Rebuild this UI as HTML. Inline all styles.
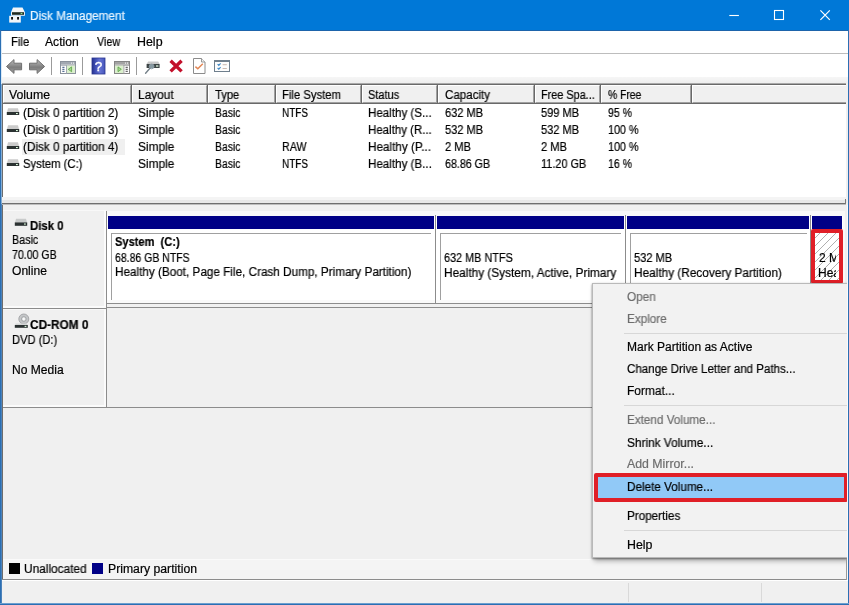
<!DOCTYPE html>
<html>
<head>
<meta charset="utf-8">
<title>Disk Management</title>
<style>
html,body{margin:0;padding:0;}
body{width:849px;height:605px;overflow:hidden;background:#f0f0f0;position:relative;
  font-family:"Liberation Sans",sans-serif;font-size:12px;color:#000;}
.a{position:absolute;}
.t{position:absolute;white-space:nowrap;line-height:14px;height:14px;font-size:12px;transform-origin:0 0;will-change:transform;-webkit-text-stroke:0.2px currentColor;}
.b{font-weight:bold;}
.g{color:#6d6d6d;}
/* window chrome */
#title{left:0;top:0;width:849px;height:31px;background:#0078d7;border-bottom:1px solid #1d64ab;box-sizing:border-box;}
#menubar{left:1px;top:31px;width:847px;height:22px;background:#fff;}
#menuline{left:1px;top:53px;width:847px;height:1px;background:#bdbdbd;}
#toolbar{left:1px;top:54px;width:847px;height:23px;background:#fff;}
#tbgrad{left:1px;top:77px;width:847px;height:7px;background:linear-gradient(#f6f6f6,#ededed);}
#bl{left:0;top:30px;width:1px;height:575px;background:#2b6fb3;}
#br{left:848px;top:30px;width:1px;height:575px;background:#2b6fb3;}
#bb{left:0;top:603px;width:849px;height:2px;background:linear-gradient(#6d9fd0 0,#6d9fd0 50%,#2b6fb3 50%);}
/* list view */
#list{left:2px;top:84px;width:844px;height:114px;background:#fff;border-left:1px solid #6d6d6d;border-top:1px solid #6a6a6a;box-sizing:border-box;}
.hd{position:absolute;top:85px;height:18px;background:#f0f0f0;box-sizing:border-box;border-top:1px solid #fff;border-left:1px solid #fff;border-right:1px solid #a0a0a0;border-bottom:1px solid #a0a0a0;}
.vs{position:absolute;top:85px;width:1px;height:18px;background:#696969;}
#hdline{left:3px;top:103px;width:843px;height:1px;background:#696969;}
#sel{left:22px;top:139px;width:103px;height:16px;background:#f0f0f0;}
/* splitter */
#split1{left:2px;top:197px;width:845px;height:6px;background:linear-gradient(#f4f4f4 0,#f4f4f4 50%,#e6e6e6 50%,#e9e9e9 100%);}
#split2{left:2px;top:203px;width:844px;height:2px;background:linear-gradient(#6e6e6e 0,#6e6e6e 50%,#bdbdbd 50%,#bdbdbd 100%);}
/* lower pane */
#lower{left:2px;top:205px;width:844px;height:374px;background:#f0f0f0;border-left:1px solid #6d6d6d;box-sizing:border-box;}
.navy{position:absolute;top:216px;height:13px;background:#000086;}
.pw{position:absolute;top:216px;height:84px;background:#fff;}
.pin{position:absolute;top:233px;height:67px;box-sizing:border-box;border-left:1px solid #a0a0a0;border-top:1px solid #a0a0a0;background:#fff;}
.vl{position:absolute;width:1px;background:#a0a0a0;}
.hl{position:absolute;height:1px;background:#a0a0a0;}
/* context menu */
#cm{left:592px;top:283px;width:256px;height:275px;background:#f2f2f2;border:1px solid #b9b9b9;box-sizing:border-box;box-shadow:0 1px 2px rgba(0,0,0,.45),2px 3px 5px rgba(0,0,0,.3);}
.sep{position:absolute;left:624px;width:224px;height:1px;background:#d7d7d7;}
.red{position:absolute;box-sizing:border-box;border:4px solid #e01f27;border-radius:2px;}
</style>
</head>
<body>
<!-- title bar -->
<div class="a" id="title"></div>
<!-- menu bar -->
<div class="a" id="menubar"></div>
<div class="a" id="menuline"></div>
<!-- toolbar -->
<div class="a" id="toolbar"></div>
<div class="a" id="tbgrad"></div>
<svg class="a" style="left:8px;top:6px;" width="18" height="18" viewBox="0 0 18 18">
<path d="M5 1.6h9.5l2.4 4.6v3.6H3V6.2z" fill="#f4f6f8"/>
<rect x="4" y="6.2" width="12" height="2.6" fill="#1f2a22"/>
<rect x="12.6" y="6.9" width="1.8" height="1.2" fill="#8fe08f"/>
<rect x="1.2" y="9.8" width="11.6" height="6.8" fill="#f1f4f8"/>
<rect x="3.1" y="11" width="1.9" height="2.6" fill="#111"/>
<rect x="9.1" y="11" width="1.9" height="2.6" fill="#111"/>
</svg>
<svg class="a" style="left:710px;top:0;" width="139" height="30" viewBox="0 0 139 30">
<path d="M19.3 15.5h9.6" stroke="#fff" stroke-width="1.1" fill="none"/>
<rect x="64.5" y="10.5" width="9" height="9" stroke="#fff" stroke-width="1.1" fill="none"/>
<path d="M110.4 10.4l9.4 9.4M119.8 10.4l-9.4 9.4" stroke="#fff" stroke-width="1.2" fill="none"/>
</svg>
<svg class="a" id="tb" style="left:0;top:54px;will-change:transform;" width="240" height="24" viewBox="0 54 240 24">
<defs>
<linearGradient id="ga" x1="0" y1="0" x2="0" y2="1"><stop offset="0" stop-color="#bdbdbd"/><stop offset="0.45" stop-color="#8a8a8a"/><stop offset="0.55" stop-color="#7c7c7c"/><stop offset="1" stop-color="#a2a2a2"/></linearGradient>
<linearGradient id="gh" x1="0" y1="0" x2="1" y2="0"><stop offset="0" stop-color="#26318a"/><stop offset="0.22" stop-color="#3b49b0"/><stop offset="0.6" stop-color="#6674d4"/><stop offset="1" stop-color="#4655bb"/></linearGradient>
</defs>
<!-- back arrow -->
<path d="M6.5 66.5L14 59.6V63.2H21.6V69.8H14V73.4z" fill="url(#ga)" stroke="#6f6f6f" stroke-width="1" stroke-linejoin="round"/>
<!-- forward arrow -->
<path d="M44.6 66.5L37.1 59.6V63.2H29.5V69.8H37.1V73.4z" fill="url(#ga)" stroke="#6f6f6f" stroke-width="1" stroke-linejoin="round"/>
<rect x="51" y="57" width="1" height="18" fill="#9b9b9b"/>
<!-- console tree icon -->
<rect x="60.5" y="61.5" width="15" height="12" fill="#fff" stroke="#8b929c" stroke-width="1"/>
<rect x="61" y="62" width="14" height="2.4" fill="#a3a9b2"/>
<rect x="71" y="62.6" width="1" height="1" fill="#fff"/><rect x="73" y="62.6" width="1" height="1" fill="#fff"/>
<rect x="60.5" y="64.6" width="15" height="1" fill="#8b929c"/>
<rect x="66.6" y="65.6" width="8.4" height="7.4" fill="#dbf0cd"/>
<rect x="66" y="65" width="1" height="8.5" fill="#a3a9b2"/>
<rect x="62.3" y="66.8" width="2.2" height="1" fill="#34507e"/><rect x="62.3" y="68.8" width="2.2" height="1" fill="#34507e"/><rect x="62.3" y="70.8" width="2.2" height="1" fill="#34507e"/>
<path d="M71.6 66.9v4.8l-3.3-2.4z" fill="#a9dc92" stroke="#58a044" stroke-width="0.8"/>
<rect x="82" y="57" width="1" height="18" fill="#9b9b9b"/>
<!-- help -->
<rect x="92" y="58" width="13" height="16" fill="url(#gh)"/>
<rect x="92" y="58" width="13" height="16" fill="none" stroke="#2a3590" stroke-width="0.8"/>
<text x="98.6" y="71.2" font-family="Liberation Sans, sans-serif" font-size="13.5" fill="#fff" stroke="#fff" stroke-width="0.35" text-anchor="middle">?</text>
<!-- icon 7 -->
<rect x="114.5" y="61.5" width="15" height="12" fill="#fff" stroke="#858585" stroke-width="1"/>
<rect x="115" y="62" width="14" height="2.4" fill="#a3a3a3"/>
<rect x="125" y="62.6" width="1" height="1" fill="#fff"/><rect x="127" y="62.6" width="1" height="1" fill="#fff"/>
<rect x="114.5" y="64.6" width="15" height="1" fill="#858585"/>
<rect x="115" y="65.6" width="8.4" height="7.4" fill="#dbf0cd"/>
<rect x="123.4" y="65" width="1" height="8.5" fill="#a3a3a3"/>
<rect x="125.6" y="66.8" width="2.2" height="1" fill="#444"/><rect x="125.6" y="68.8" width="2.2" height="1" fill="#444"/><rect x="125.6" y="70.8" width="2.2" height="1" fill="#444"/>
<path d="M118 66.9v4.8l3.3-2.4z" fill="#a9dc92" stroke="#58a044" stroke-width="0.8"/>
<rect x="136" y="57" width="1" height="18" fill="#9b9b9b"/>
<!-- rescan: disk + magnifier -->
<path d="M148.2 61.6h10l1.4 2.4H146.6z" fill="#c9c9c9"/>
<rect x="146.6" y="64" width="13" height="4" fill="#3c4444"/>
<rect x="156" y="65.4" width="2.4" height="1.2" fill="#e8ffe8"/>
<circle cx="151.6" cy="66.4" r="2.4" fill="#9fb6c0" fill-opacity="0.75" stroke="#8b9ba4" stroke-width="0.9"/>
<path d="M149.9 68.3L145.6 73.2" stroke="#76828a" stroke-width="1.4" stroke-linecap="round"/>
<!-- red X -->
<path d="M170.6 60.8L181.6 71.4M181.6 60.8L170.6 71.4" stroke="#c3102b" stroke-width="3.4" fill="none"/>
<!-- doc with check -->
<path d="M193.5 58.5h8l3.5 3.5v11.5h-11.5z" fill="#fff" stroke="#8c8c8c" stroke-width="1"/>
<path d="M201.5 58.5v3.5h3.5" fill="#f2f2f2" stroke="#8c8c8c" stroke-width="0.9"/>
<path d="M195.4 66.6l2.4 2.2l5-5" stroke="#e28756" stroke-width="1.5" fill="none"/>
<!-- checklist -->
<rect x="214.5" y="60.5" width="15" height="11" fill="#fdfdfd" stroke="#6f7f8d" stroke-width="1"/>
<rect x="214" y="60" width="16" height="2" fill="#6f7f8d"/>
<path d="M217.6 64.2l1.2 1.2l1.8-2M217.6 68l1.2 1.2l1.8-2" stroke="#3b86c4" stroke-width="1.1" fill="none"/>
<rect x="222.6" y="64.2" width="4.2" height="1" fill="#c9b9b0"/><rect x="222.6" y="68" width="4.2" height="1" fill="#c9b9b0"/>
</svg>
<!-- list -->
<div class="a" style="left:2px;top:83px;width:844px;height:1px;background:#a9a9a9;"></div>
<div class="a" id="list"></div>
<div class="hd" style="left:3px;width:128px;"></div>
<div class="vs" style="left:131px;"></div>
<div class="hd" style="left:132px;width:75px;"></div>
<div class="vs" style="left:207px;"></div>
<div class="hd" style="left:208px;width:67px;"></div>
<div class="vs" style="left:275px;"></div>
<div class="hd" style="left:276px;width:85px;"></div>
<div class="vs" style="left:361px;"></div>
<div class="hd" style="left:362px;width:75px;"></div>
<div class="vs" style="left:437px;"></div>
<div class="hd" style="left:438px;width:96px;"></div>
<div class="vs" style="left:534px;"></div>
<div class="hd" style="left:535px;width:65px;"></div>
<div class="vs" style="left:600px;"></div>
<div class="hd" style="left:601px;width:90px;"></div>
<div class="vs" style="left:691px;"></div>
<div class="hd" style="left:692px;width:154px;border-right:none;"></div>
<div class="a" id="sel"></div>
<svg class="a dk" style="left:6px;top:108px;" width="14" height="8" viewBox="0 0 14 8"><path d="M2 0.2h10l1 4H1z" fill="#cbcbcb"/><rect x="0.8" y="4" width="12.4" height="3" fill="#2b3232"/><rect x="10" y="5" width="1.8" height="1.1" fill="#dfffe0"/></svg>
<svg class="a dk" style="left:6px;top:125px;" width="14" height="8" viewBox="0 0 14 8"><path d="M2 0.2h10l1 4H1z" fill="#cbcbcb"/><rect x="0.8" y="4" width="12.4" height="3" fill="#2b3232"/><rect x="10" y="5" width="1.8" height="1.1" fill="#dfffe0"/></svg>
<svg class="a dk" style="left:6px;top:142px;" width="14" height="8" viewBox="0 0 14 8"><path d="M2 0.2h10l1 4H1z" fill="#cbcbcb"/><rect x="0.8" y="4" width="12.4" height="3" fill="#2b3232"/><rect x="10" y="5" width="1.8" height="1.1" fill="#dfffe0"/></svg>
<svg class="a dk" style="left:6px;top:159px;" width="14" height="8" viewBox="0 0 14 8"><path d="M2 0.2h10l1 4H1z" fill="#cbcbcb"/><rect x="0.8" y="4" width="12.4" height="3" fill="#2b3232"/><rect x="10" y="5" width="1.8" height="1.1" fill="#dfffe0"/></svg>
<div class="a" id="hdline"></div>
<!-- splitter -->
<div class="a" id="split1"></div>
<div class="a" id="split2"></div>
<!-- lower pane -->
<div class="a" id="lower"></div>
<div class="a" style="left:3px;top:210px;width:103px;height:98px;background:#f0f0f0;box-sizing:border-box;border-right:2px solid #fbfbfb;border-bottom:2px solid #fbfbfb;border-top:1px solid #f8f8f8;"></div>
<div class="a" style="left:3px;top:309px;width:103px;height:98px;background:#f0f0f0;box-sizing:border-box;border-right:2px solid #fbfbfb;border-bottom:2px solid #fbfbfb;border-top:1px solid #f8f8f8;"></div>
<div class="vl" style="left:106px;top:211px;height:197px;background:#8c8c8c;"></div>
<div class="hl" style="left:3px;top:308px;width:104px;background:#8c8c8c;"></div>
<div class="hl" style="left:107px;top:303px;width:739px;background:#8c8c8c;"></div>
<div class="hl" style="left:107px;top:307px;width:739px;background:#8c8c8c;"></div>
<div class="hl" style="left:3px;top:407px;width:843px;background:#8c8c8c;"></div>
<div class="a" style="left:107px;top:211px;width:738px;height:92px;background:#f9f9f9;"></div>
<div class="pw" style="left:107px;width:328px;"></div>
<div class="navy" style="left:108px;width:326px;"></div>
<div class="pin" style="left:111px;width:320px;"></div>
<div class="pw" style="left:436px;width:189px;"></div>
<div class="navy" style="left:437px;width:187px;"></div>
<div class="pin" style="left:440px;width:181px;"></div>
<div class="pw" style="left:626px;width:184px;"></div>
<div class="navy" style="left:627px;width:182px;"></div>
<div class="pin" style="left:630px;width:177px;"></div>
<div class="pw" style="left:811px;width:32px;"></div>
<div class="navy" style="left:812px;width:30px;"></div>
<div class="vl" style="left:435px;top:215px;height:88px;background:#8c8c8c;"></div>
<div class="vl" style="left:625px;top:215px;height:88px;background:#8c8c8c;"></div>
<div class="vl" style="left:810px;top:215px;height:88px;background:#8c8c8c;"></div>
<svg class="a" style="left:812px;top:229px;" width="30" height="74" viewBox="0 0 30 74"><defs><pattern id="hat" width="8" height="8" patternUnits="userSpaceOnUse" patternTransform="translate(4 0)"><path d="M-1 9L9 -1M-1 1L1 -1M7 9L9 7" stroke="#a6a6a6" stroke-width="0.9"/></pattern></defs><rect width="30" height="74" fill="#fff"/><rect width="30" height="74" fill="url(#hat)"/></svg>
<div class="a" style="left:815px;top:233px;width:21px;height:47px;overflow:hidden;"><div class="t" style="left:4px;top:18px;transform:scaleX(1.0);">2 MB</div><div class="t" style="left:3px;top:33px;transform:scaleX(1.0);">Healthy</div></div>
<div class="red" style="left:811px;top:229px;width:32px;height:55px;"></div>
<div class="a" style="left:3px;top:559px;width:843px;height:20px;background:#f4f4f4;border-top:1px solid #fafafa;box-sizing:border-box;"></div>
<div class="hl" style="left:2px;top:579px;width:845px;background:#8c8c8c;"></div>
<div class="a" style="left:9px;top:563px;width:11px;height:11px;background:#000;"></div>
<div class="a" style="left:92px;top:563px;width:11px;height:11px;background:#000086;"></div>
<div class="a" style="left:1px;top:580px;width:847px;height:1px;background:#fff;"></div>
<div class="vl" style="left:628px;top:583px;height:19px;background:#d9d9d9;"></div>
<div class="vl" style="left:761px;top:583px;height:19px;background:#d9d9d9;"></div>
<div class="a" id="cm"></div>
<div class="a" style="left:597px;top:476px;width:248px;height:23px;background:#91c9f7;"></div>
<div class="sep" style="top:333px;"></div>
<div class="sep" style="top:405px;"></div>
<div class="sep" style="top:530px;"></div>
<div class="red" style="left:594px;top:473px;width:254px;height:29px;"></div>
<svg class="a" style="left:14px;top:218px;" width="14" height="9" viewBox="0 0 14 9"><path d="M2 0.8h10l1 3.6H1z" fill="#c9cbcb"/><rect x="0.8" y="4.4" width="12.4" height="3.4" fill="#2b3232"/><rect x="10" y="5.5" width="1.8" height="1.1" fill="#dfffe0"/></svg>
<svg class="a" style="left:14px;top:313px;" width="16" height="16" viewBox="0 0 16 16"><circle cx="9.8" cy="6" r="5" fill="#c4c6c8" stroke="#9a9c9e" stroke-width="0.8"/><circle cx="9.8" cy="6" r="2.3" fill="#e9ebec" stroke="#8f9294" stroke-width="0.7"/><circle cx="9.8" cy="6" r="0.9" fill="#fdfdfd"/><path d="M1.6 10.6h11.4l0.6 1.6H1z" fill="#d5d7d7"/><rect x="0.8" y="12" width="13" height="2.8" fill="#2b3232"/><rect x="10.6" y="12.8" width="1.8" height="1.1" fill="#dfffe0"/></svg>
<div class="vl" style="left:846px;top:559px;height:21px;background:#9a9a9a;"></div>
<div class="vl" style="left:847px;top:205px;height:375px;background:#fbfbfb;"></div>
<div class="vl" style="left:845px;top:199px;height:5px;background:#7a7a7a;"></div>
<div class="t" style="left:30px;top:9px;transform:scaleX(0.9802);color:#eaf6ff;">Disk Management</div>
<div class="t" style="left:11px;top:35px;transform:scaleX(0.9444);">File</div>
<div class="t" style="left:45px;top:35px;transform:scaleX(1.0091);">Action</div>
<div class="t" style="left:97px;top:35px;transform:scaleX(0.8962);">View</div>
<div class="t" style="left:137px;top:35px;transform:scaleX(1.0348);">Help</div>
<div class="t" style="left:9px;top:88px;transform:scaleX(1.0256);">Volume</div>
<div class="t" style="left:138px;top:88px;transform:scaleX(0.9886);">Layout</div>
<div class="t" style="left:215px;top:88px;transform:scaleX(0.9320);">Type</div>
<div class="t" style="left:282px;top:88px;transform:scaleX(0.9393);">File System</div>
<div class="t" style="left:368px;top:88px;transform:scaleX(0.9182);">Status</div>
<div class="t" style="left:445px;top:88px;transform:scaleX(0.9630);">Capacity</div>
<div class="t" style="left:541px;top:88px;transform:scaleX(0.9053);">Free Spa...</div>
<div class="t" style="left:608px;top:88px;transform:scaleX(0.8605);">% Free</div>
<div class="t" style="left:23px;top:106px;transform:scaleX(0.9792);">(Disk 0 partition 2)</div>
<div class="t" style="left:138px;top:106px;transform:scaleX(0.9886);">Simple</div>
<div class="t" style="left:215px;top:106px;transform:scaleX(0.8679);">Basic</div>
<div class="t" style="left:282px;top:106px;transform:scaleX(0.8300);">NTFS</div>
<div class="t" style="left:368px;top:106px;transform:scaleX(0.9641);">Healthy (S...</div>
<div class="t" style="left:445px;top:106px;transform:scaleX(0.9225);">632 MB</div>
<div class="t" style="left:541px;top:106px;transform:scaleX(0.9225);">599 MB</div>
<div class="t" style="left:608px;top:106px;transform:scaleX(0.8731);">95 %</div>
<div class="t" style="left:23px;top:123px;transform:scaleX(0.9792);">(Disk 0 partition 3)</div>
<div class="t" style="left:138px;top:123px;transform:scaleX(0.9886);">Simple</div>
<div class="t" style="left:215px;top:123px;transform:scaleX(0.8679);">Basic</div>
<div class="t" style="left:368px;top:123px;transform:scaleX(0.9569);">Healthy (R...</div>
<div class="t" style="left:445px;top:123px;transform:scaleX(0.9225);">532 MB</div>
<div class="t" style="left:541px;top:123px;transform:scaleX(0.9225);">532 MB</div>
<div class="t" style="left:608px;top:123px;transform:scaleX(0.9000);">100 %</div>
<div class="t" style="left:23px;top:140px;transform:scaleX(0.9792);">(Disk 0 partition 4)</div>
<div class="t" style="left:138px;top:140px;transform:scaleX(0.9886);">Simple</div>
<div class="t" style="left:215px;top:140px;transform:scaleX(0.8679);">Basic</div>
<div class="t" style="left:282px;top:140px;transform:scaleX(0.8926);">RAW</div>
<div class="t" style="left:368px;top:140px;transform:scaleX(0.9762);">Healthy (P...</div>
<div class="t" style="left:445px;top:140px;transform:scaleX(0.9269);">2 MB</div>
<div class="t" style="left:541px;top:140px;transform:scaleX(0.9269);">2 MB</div>
<div class="t" style="left:608px;top:140px;transform:scaleX(0.9000);">100 %</div>
<div class="t" style="left:23px;top:157px;transform:scaleX(0.9387);">System (C:)</div>
<div class="t" style="left:138px;top:157px;transform:scaleX(0.9886);">Simple</div>
<div class="t" style="left:215px;top:157px;transform:scaleX(0.8679);">Basic</div>
<div class="t" style="left:282px;top:157px;transform:scaleX(0.8300);">NTFS</div>
<div class="t" style="left:368px;top:157px;transform:scaleX(0.9672);">Healthy (B...</div>
<div class="t" style="left:445px;top:157px;transform:scaleX(0.8898);">68.86 GB</div>
<div class="t" style="left:541px;top:157px;transform:scaleX(0.9083);">11.20 GB</div>
<div class="t" style="left:608px;top:157px;transform:scaleX(0.8731);">16 %</div>
<div class="t b" style="left:30px;top:219px;transform:scaleX(0.9471);">Disk 0</div>
<div class="t" style="left:12px;top:233px;transform:scaleX(0.8964);">Basic</div>
<div class="t" style="left:12px;top:248px;transform:scaleX(0.8816);">70.00 GB</div>
<div class="t" style="left:12px;top:264px;transform:scaleX(1.0061);">Online</div>
<div class="t b" style="left:30px;top:318px;transform:scaleX(0.9847);">CD-ROM 0</div>
<div class="t" style="left:12px;top:333px;transform:scaleX(0.9277);">DVD (D:)</div>
<div class="t" style="left:12px;top:363px;transform:scaleX(1.0060);">No Media</div>
<div class="t b" style="left:115px;top:235px;transform:scaleX(0.9246);">System&nbsp; (C:)</div>
<div class="t" style="left:115px;top:251px;transform:scaleX(0.8750);">68.86 GB NTFS</div>
<div class="t" style="left:115px;top:265px;transform:scaleX(0.9768);">Healthy (Boot, Page File, Crash Dump, Primary Partition)</div>
<div class="t" style="left:444px;top:251px;transform:scaleX(0.9053);">632 MB NTFS</div>
<div class="t" style="left:444px;top:266px;transform:scaleX(0.9856);">Healthy (System, Active, Primary</div>
<div class="t" style="left:634px;top:251px;transform:scaleX(0.9250);">532 MB</div>
<div class="t" style="left:634px;top:266px;transform:scaleX(0.9851);">Healthy (Recovery Partition)</div>
<div class="t" style="left:24px;top:562px;transform:scaleX(0.9887);">Unallocated</div>
<div class="t" style="left:108px;top:562px;transform:scaleX(1.0186);">Primary partition</div>
<div class="t g" style="left:627px;top:290px;transform:scaleX(0.9786);">Open</div>
<div class="t g" style="left:627px;top:312px;transform:scaleX(0.9769);">Explore</div>
<div class="t" style="left:627px;top:340px;transform:scaleX(1.0008);">Mark Partition as Active</div>
<div class="t" style="left:627px;top:362px;transform:scaleX(0.9642);">Change Drive Letter and Paths...</div>
<div class="t" style="left:627px;top:384px;transform:scaleX(0.9935);">Format...</div>
<div class="t g" style="left:627px;top:413px;transform:scaleX(0.9742);">Extend Volume...</div>
<div class="t" style="left:627px;top:436px;transform:scaleX(0.9871);">Shrink Volume...</div>
<div class="t g" style="left:627px;top:457px;transform:scaleX(1.0250);">Add Mirror...</div>
<div class="t" style="left:627px;top:480px;transform:scaleX(0.9756);">Delete Volume...</div>
<div class="t" style="left:627px;top:509px;transform:scaleX(0.9736);">Properties</div>
<div class="t" style="left:627px;top:538px;transform:scaleX(1.0304);">Help</div>
<!-- borders -->
<div class="a" id="bl"></div><div class="a" style="left:1px;top:31px;width:1px;height:53px;background:#dbe9f6;"></div><div class="a" style="left:1px;top:84px;width:1px;height:120px;background:#86add3;"></div><div class="a" style="left:1px;top:204px;width:1px;height:400px;background:#4c82ba;"></div><div class="a" id="br"></div><div class="a" id="bb"></div>
</body>
</html>
